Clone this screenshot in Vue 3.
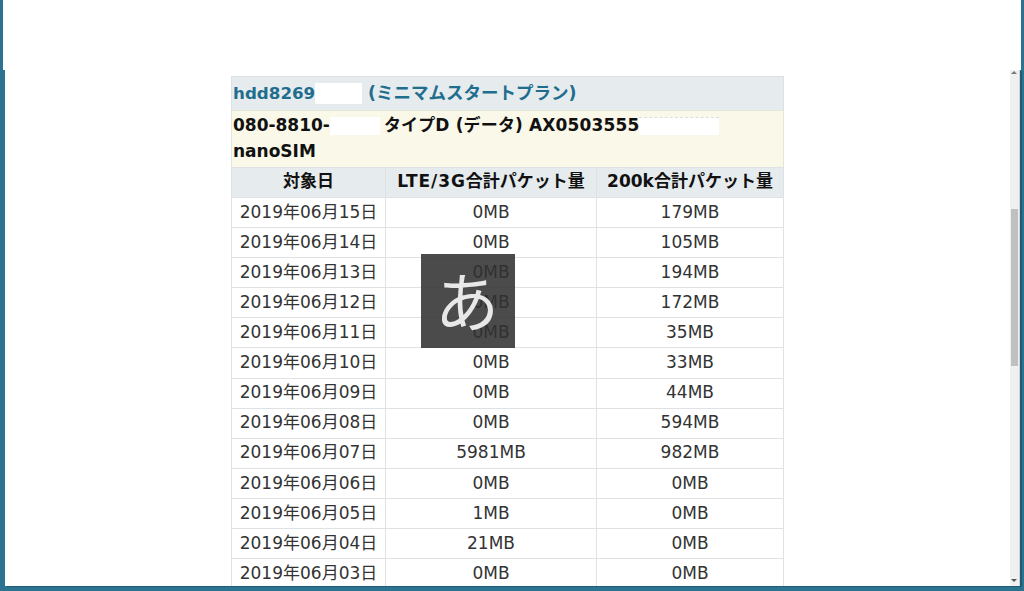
<script setup>
const rows = [
  ['2019年06月15日', '0MB', '179MB'],
  ['2019年06月14日', '0MB', '105MB'],
  ['2019年06月13日', '0MB', '194MB'],
  ['2019年06月12日', '0MB', '172MB'],
  ['2019年06月11日', '0MB', '35MB'],
  ['2019年06月10日', '0MB', '33MB'],
  ['2019年06月09日', '0MB', '44MB'],
  ['2019年06月08日', '0MB', '594MB'],
  ['2019年06月07日', '5981MB', '982MB'],
  ['2019年06月06日', '0MB', '0MB'],
  ['2019年06月05日', '1MB', '0MB'],
  ['2019年06月04日', '21MB', '0MB'],
  ['2019年06月03日', '0MB', '0MB'],
  ['2019年06月02日', '0MB', '0MB'],
]
</script>

<template>
  <div class="desktop">
    <div class="top-strip"></div>
    <div class="window">
      <div class="content">
        <div class="card">
          <div class="title">hdd8269<span class="mask mask-user"></span> <span class="plan">(ミニマムスタートプラン)</span></div>
          <div class="info">080-8810-<span class="mask mask-phone"></span><span class="sim-type">タイプD (データ) AX0503555</span><span class="mask mask-serial"></span><br />nanoSIM</div>
          <table class="usage">
            <colgroup>
              <col class="col-date" />
              <col class="col-lte" />
              <col class="col-low" />
            </colgroup>
            <thead>
              <tr>
                <th>対象日</th>
                <th><span class="wide">LTE/3G</span>合計パケット量</th>
                <th>200k合計パケット量</th>
              </tr>
            </thead>
            <tbody>
              <tr v-for="row in rows" :key="row[0]">
                <td v-for="cell in row" :key="cell">{{ cell }}</td>
              </tr>
            </tbody>
          </table>
        </div>
        <div class="ime">あ</div>
      </div>
      <div class="scrollbar">
        <span class="arrow arrow-up"></span>
        <span class="thumb"></span>
        <span class="arrow arrow-down"></span>
      </div>
    </div>
  </div>
</template>

<style>
html, body {
  margin: 0;
  background: #2b7390;
}
</style>

<style scoped>
.desktop {
  width: 1024px;
  height: 591px;
  display: flex;
  flex-direction: column;
  overflow: hidden;
  background: #2b7390;
  font-family: "DejaVu Sans", "Noto Sans CJK JP", sans-serif;
  font-size: 17px;
  color: #222;
}
.top-strip {
  height: 70px;
  margin: 0 3px;
  background: #fff;
  flex: none;
}
.window {
  flex: 1;
  min-height: 0;
  margin: 0 4px 5px 5px;
  display: flex;
  background: #fff;
  box-shadow: 2px 1px 0 #1f5c74;
}
.content {
  flex: 1;
  min-width: 0;
  position: relative;
  overflow: hidden;
  padding: 6px 0 0 226px;
}
.card {
  width: 553px;
  box-sizing: border-box;
  font-weight: 700;
}
.title {
  height: 34px;
  box-sizing: border-box;
  padding: 0 1px;
  font-size: 16.7px;
  line-height: 33px;
  background: #e6ebee;
  border: 1px solid #dde1e4;
  border-bottom: 0;
  color: #1f6e8e;
  white-space: nowrap;
}
.plan {
  font-size: 17.5px;
}
.info {
  height: 57px;
  box-sizing: border-box;
  padding: 1px 1px 0;
  line-height: 26px;
  background: #f9f8e9;
  border: 1px solid #e4e6dc;
  border-width: 1px 1px 0;
  color: #111;
  white-space: nowrap;
}
.sim-type {
  letter-spacing: 0.15px;
}
.mask {
  display: inline-block;
  height: 18px;
  vertical-align: -4px;
  background: #fff;
}
.mask-user {
  width: 47px;
  height: 21px;
  vertical-align: -5px;
}
.mask-phone {
  width: 50px;
  margin-right: 4px;
}
.mask-serial {
  width: 80px;
  border-top: 1px dashed #ddd;
  box-sizing: border-box;
}
.usage {
  width: 552px;
  border-collapse: collapse;
  table-layout: fixed;
}
.col-date { width: 154px; }
.col-lte { width: 211px; }
.col-low { width: 187px; }
th, td {
  padding: 0 0 1.5px;
  border: 1px solid #dfe2e4;
  text-align: center;
  height: 30.08px;
  box-sizing: border-box;
  line-height: 20px;
  white-space: nowrap;
}
th {
  padding-bottom: 4px;
  background: #e6ebee;
  color: #111;
  font-weight: 700;
}
td {
  font-weight: 400;
  color: #333;
}
.wide {
  letter-spacing: 0.9px;
}
.ime {
  position: absolute;
  left: 416px;
  top: 184px;
  width: 94px;
  height: 94px;
  box-sizing: border-box;
  padding-right: 2px;
  background: rgba(48, 48, 48, 0.87);
  color: #e8e8e8;
  font-family: "Noto Sans CJK JP", sans-serif;
  font-weight: 400;
  font-size: 64px;
  line-height: 88px;
  text-align: center;
}
.scrollbar {
  flex: none;
  width: 9px;
  position: relative;
  background: #f0f0f0;
  border-right: 1px solid #d0d4d6;
}
.thumb {
  position: absolute;
  left: 1px;
  right: 1px;
  top: 139px;
  height: 157px;
  background: #c0c0c0;
}
.arrow {
  position: absolute;
  left: 1px;
  width: 0;
  height: 0;
  border-left: 3px solid transparent;
  border-right: 3px solid transparent;
}
.arrow-up {
  top: 1px;
  border-bottom: 3px solid #777;
}
.arrow-down {
  bottom: 4px;
  border-top: 3px solid #555;
}
</style>
